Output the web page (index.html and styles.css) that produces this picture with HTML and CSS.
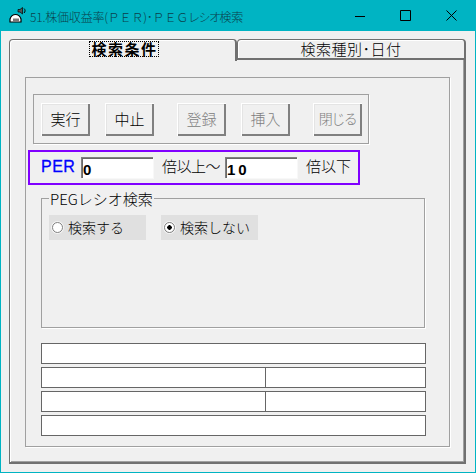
FILE: index.html
```html
<!DOCTYPE html>
<html lang="ja">
<head>
    <meta charset="UTF-8">
    <title>51.株価収益率(ＰＥＲ)･ＰＥＧレシオ検索</title>
    <link rel="stylesheet" href="styles.css">
</head>
<body>
<div class="window">
    <div class="titlebar">
        <svg class="app_icon" width="17" height="16" viewBox="0 0 17 16">
            <path d="M1 15 V12 C2 9 4 7.5 6.5 7.5 C9 7.5 11 9 12 12 V15 Z" fill="#fff" stroke="#000" stroke-width="1.2"/>
            <path d="M4 15 V11.5 H10 V15 Z" fill="#777"/>
            <path d="M9 5 V2.5 H11 L13.5 0.5 V7 L11 5 Z" fill="#555" stroke="#000" stroke-width="0.7"/>
            <path d="M15 1.5 C16.4 2.7 16.4 4.8 15 6" fill="none" stroke="#000"/>
        </svg>
        <span class="title_text">51.株価収益率(ＰＥＲ)･ＰＥＧ<span class="kana">レシオ</span>検索</span>
        <div class="controls">
            <svg width="10" height="10" viewBox="0 0 10 10"><path d="M0 5.5 H10" stroke="#000"/></svg>
            <svg width="11" height="11" viewBox="0 0 11 11"><path d="M0.5 0.5 H10.5 V10.5 H0.5 Z" fill="none" stroke="#000"/></svg>
            <svg width="11" height="11" viewBox="0 0 11 11"><path d="M0.5 0.5 L10.5 10.5 M10.5 0.5 L0.5 10.5" stroke="#000"/></svg>
        </div>
    </div>
    <div class="tabs">
        <div class="tab tab_active"><span class="tab_focus">検索条件</span></div>
        <div class="tab">検索種別･日付</div>
    </div>
    <div class="panel">
        <div class="frame">
            <div class="button_group">
                <button class="btn">実行</button>
                <button class="btn">中止</button>
                <button class="btn btn_wide" disabled>登録</button>
                <button class="btn" disabled>挿入</button>
                <button class="btn btn_wide btn_close" disabled>閉じる</button>
            </div>
            <div class="per_box">
                <span class="per_label">PER</span>
                <input class="num_input" type="text" value="0">
                <span class="per_from">倍以上～</span>
                <input class="num_input" type="text" value="10">
                <span class="per_to">倍以下</span>
            </div>
            <div class="peg_group">
                <span class="peg_label">PEGレシオ検索</span>
                <label class="radio_item"><input type="radio" name="peg"> 検索する</label>
                <label class="radio_item"><input type="radio" name="peg" checked> 検索しない</label>
            </div>
            <div class="result_box"></div>
            <div class="result_box result_split"><div></div><div></div></div>
            <div class="result_box result_split"><div></div><div></div></div>
            <div class="result_box"></div>
        </div>
    </div>
</div>
</body>
</html>
```

FILE: styles.css
```css
*
{
    box-sizing: border-box;
}
body
{
    margin: 0;
    background-color: #f0f0f0;
    font-family: "Noto Sans CJK JP", "Liberation Sans", sans-serif;
    font-weight: 300;
    color: #000;
}
.window
{
    width: 476px;
    height: 473px;
    border: 1px solid #00b4c3;
    border-top: none;
    background-color: #f0f0f0;
    overflow: hidden;
}
.titlebar
{
    height: 31px;
    margin: 0 -1px;
    background-color: #00b4c3;
    display: flex;
    align-items: center;
    font-size: 12px;
    color: #0b3f4a;
}
.app_icon
{
    margin: 0 0 1px 9px;
}
.title_text
{
    margin-left: 4px;
    margin-top: 2px;
    white-space: nowrap;
    letter-spacing: -0.2px;
}
.kana
{
    letter-spacing: -1.5px;
}
.controls
{
    margin-left: auto;
    display: flex;
    align-items: center;
    gap: 35px;
    padding-right: 19px;
}
.tabs
{
    display: flex;
    margin: 8px 0 0 8px;
    height: 21px;
    font-size: 15px;
}
.tab
{
    width: 229px;
    height: 21px;
    border: 1px solid #707070;
    border-bottom: 2px solid #707070;
    border-right: 2px solid #707070;
    border-radius: 4px 4px 0 0;
    box-shadow: inset 1px 1px 0 #fff;
    text-align: center;
    line-height: 18px;
    letter-spacing: 0.5px;
}
.tab_active
{
    width: 228px;
    height: 22px;
    border-bottom: none;
    background-color: #f0f0f0;
    position: relative;
    z-index: 1;
    padding-left: 3px;
    font-weight: bold;
    font-size: 15px;
    letter-spacing: 1.5px;
}
.tab_focus
{
    display: inline-block;
    height: 16px;
    line-height: 14px;
    border: 1px dotted #000;
    padding: 0 0 0 1px;
}
.panel
{
    margin-left: 8px;
    width: 457px;
    height: 404px;
    border-left: 1px solid #707070;
    border-right: 2px solid #707070;
    border-bottom: 2px solid #707070;
    box-shadow: inset 1px 0 0 #fff, inset -1px -1px 0 #a0a0a0;
    padding: 17px 0 0 15px;
}
.frame
{
    width: 425px;
    height: 370px;
    border: 1px solid #a0a0a0;
    box-shadow: 1px 1px 0 #fff;
    padding: 16px 0 0 15px;
}
.button_group
{
    margin-left: -8px;
    width: 336px;
    height: 50px;
    border: 1px solid #a0a0a0;
    box-shadow: 1px 1px 0 #fff;
    padding: 8px 0 0 7px;
    display: flex;
    gap: 15px;
}
.btn
{
    width: 49px;
    height: 33px;
    padding: 0 0 3px 0;
    border: none;
    background-color: #f0f0f0;
    font-family: inherit;
    font-weight: 300;
    font-size: 15px;
    color: #000;
    box-shadow: inset 1px 1px 0 #fff, inset -2px -2px 0 #808080, inset 2px 2px 0 #e4e4e4;
}
.btn_wide
{
    margin-left: 8px;
}
.btn_close
{
    font-size: 14px;
    letter-spacing: -1.5px;
}
.btn:disabled
{
    color: #808080;
}
.per_box
{
    margin: 6px 0 0 -13px;
    width: 332px;
    height: 35px;
    border: 2px solid #8000ff;
    padding-left: 11px;
    display: flex;
    align-items: center;
    font-size: 15px;
}
.per_label
{
    width: 40px;
    font-family: "Liberation Sans", sans-serif;
    font-size: 16px;
    letter-spacing: 0.5px;
    font-weight: normal;
    -webkit-text-stroke: 0.3px #0000ff;
    color: #0000ff;
    position: relative;
    top: -1px;
}
.num_input
{
    width: 72px;
    height: 21px;
    padding: 3px 0 0 2px;
    border: none;
    background-color: #fff;
    box-shadow: inset 1px 1px 0 #808080, inset 2px 2px 0 #696969, 1px 1px 0 #f8f8f8;
    font-family: "Liberation Sans", sans-serif;
    font-weight: bold;
    font-size: 15px;
    letter-spacing: 3px;
}
.per_from
{
    width: 63px;
    margin-left: 9px;
    letter-spacing: -0.5px;
    white-space: nowrap;
    position: relative;
    top: -2px;
}
.per_to
{
    margin-left: 9px;
    position: relative;
    top: -2px;
}
.peg_group
{
    margin-top: 13px;
    width: 384px;
    height: 130px;
    border: 1px solid #a0a0a0;
    box-shadow: 1px 1px 0 #fff;
    padding: 16px 0 0 7px;
    display: flex;
    align-items: flex-start;
    gap: 15px;
    font-size: 14px;
    position: relative;
}
.peg_label
{
    position: absolute;
    left: 7px;
    top: -10px;
    padding: 0 1px;
    background-color: #f0f0f0;
    line-height: 20px;
    font-size: 15px;
    white-space: nowrap;
}
.radio_item
{
    width: 97px;
    height: 25px;
    background-color: #e0e0e0;
    display: flex;
    align-items: center;
    padding: 0 0 2px 3px;
    gap: 5px;
    white-space: nowrap;
}
.radio_item input
{
    appearance: none;
    width: 11px;
    height: 11px;
    margin: 2px 0 0 0;
    border: 1px solid #808080;
    border-radius: 50%;
    background-color: #fff;
    box-shadow: 0 0 0 1px #f4f4f4;
}
.radio_item input:checked
{
    background: radial-gradient(circle, #000 0, #000 2px, #fff 2.5px);
}
.result_box
{
    margin-top: 3px;
    width: 385px;
    height: 21px;
    border: 1px solid #666;
    background-color: #fff;
}
.peg_group + .result_box
{
    margin-top: 15px;
}
.result_split
{
    display: flex;
}
.result_split div:first-child
{
    width: 224px;
    border-right: 1px solid #666;
}
```
